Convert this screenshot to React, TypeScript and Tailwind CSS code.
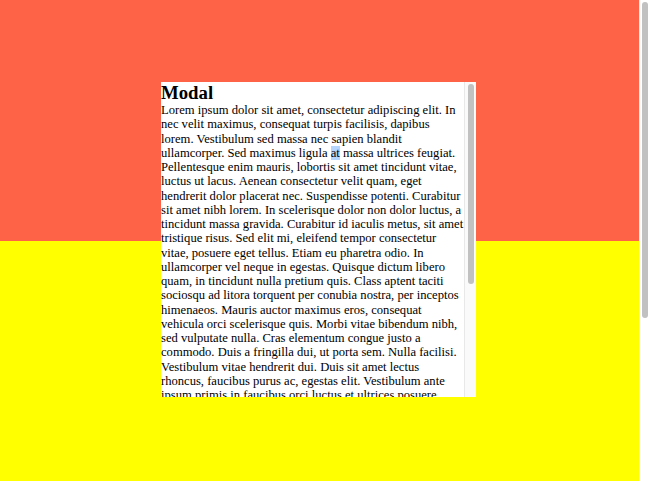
const LOREM_BEFORE =
  'Lorem ipsum dolor sit amet, consectetur adipiscing elit. In nec velit maximus, consequat turpis facilisis, dapibus lorem. Vestibulum sed massa nec sapien blandit ullamcorper. Sed maximus ligula '

const LOREM_AFTER =
  ' massa ultrices feugiat. Pellentesque enim mauris, lobortis sit amet tincidunt vitae, luctus ut lacus. Aenean consectetur velit quam, eget hendrerit dolor placerat nec. Suspendisse potenti. Curabitur sit amet nibh lorem. In scelerisque dolor non dolor luctus, a tincidunt massa gravida. Curabitur id iaculis metus, sit amet tristique risus. Sed elit mi, eleifend tempor consectetur vitae, posuere eget tellus. Etiam eu pharetra odio. In ullamcorper vel neque in egestas. Quisque dictum libero quam, in tincidunt nulla pretium quis. Class aptent taciti sociosqu ad litora torquent per conubia nostra, per inceptos himenaeos. Mauris auctor maximus eros, consequat vehicula orci scelerisque quis. Morbi vitae bibendum nibh, sed vulputate nulla. Cras elementum congue justo a commodo. Duis a fringilla dui, ut porta sem. Nulla facilisi. Vestibulum vitae hendrerit dui. Duis sit amet lectus rhoncus, faucibus purus ac, egestas elit. Vestibulum ante ipsum primis in faucibus orci luctus et ultrices posuere cubilia curae; Nam eget lorem non nunc tempor finibus. Integer vel ante sit amet enim pulvinar pharetra. Donec sagittis, arcu sed vestibulum tempus, ligula nisi ultricies lectus, non sodales nibh lacus at mi.'

// scrollbars are drawn by hand: the headless browser hides real ones
function Scrollbar({ track, thumb }: { track: string; thumb: string }) {
  return (
    <div className={`flex shrink-0 justify-center border-l ${track}`}>
      <div className={`rounded-full bg-[#c1c1c1] ${thumb}`} />
    </div>
  )
}

export default function App() {
  return (
    <div className="relative flex h-screen overflow-hidden font-['Liberation_Serif','Times_New_Roman',serif] text-black">
      <div className="flex-1">
        <section className="h-[50vh] bg-[#ff6347]" />
        <section className="h-[50vh] bg-[#ffff00]" />
      </div>
      <Scrollbar track="w-[11px] bg-white border-[#ececec] pt-[2px]" thumb="w-[6px] h-[316px]" />

      {/* modal sits over the page, centred in the area left of the scrollbar */}
      <div className="pointer-events-none absolute inset-y-0 left-0 right-[11px] flex items-center justify-center">
        <div className="pointer-events-auto mr-[2px] mb-[2px] flex h-[315px] w-[315px] bg-white">
          <div className="flex-1 overflow-hidden">
            <h2 className="text-[18.75px] font-bold leading-[21px]">Modal</h2>
            <p className="text-[12.6px] leading-[14.25px]">
              {LOREM_BEFORE}
              <span className="bg-[#b4d5fe]">at</span>
              {LOREM_AFTER}
            </p>
          </div>
          <Scrollbar track="w-[12px] bg-[#fafafa] border-[#e8e8e8] pt-[2px]" thumb="w-[6px] h-[200px]" />
        </div>
      </div>
    </div>
  )
}
